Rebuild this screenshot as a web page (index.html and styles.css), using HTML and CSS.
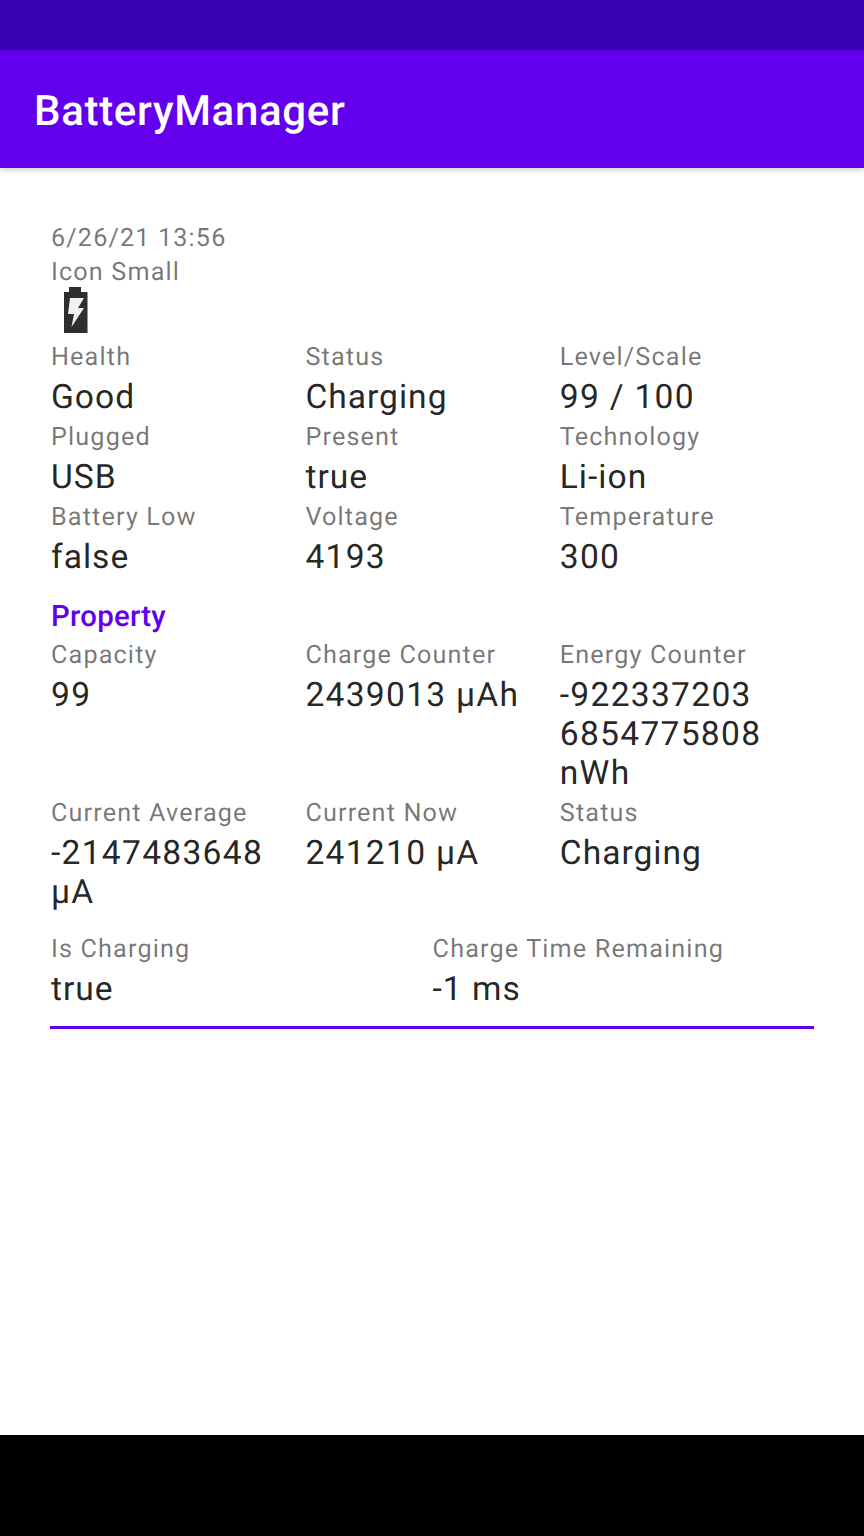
FILE: index.html
```html
<!DOCTYPE html>
<html lang="en">
  <head>
    <meta charset="UTF-8" />
    <meta name="viewport" content="width=device-width, initial-scale=1.0" />
    <title>BatteryManager</title>
    <link rel="stylesheet" href="styles.css">
  </head>
  <body>
    <div class="status-bar"></div>
    <header class="app-bar">BatteryManager</header>

    <main class="content">
      <div class="label">6/26/21 13:56</div>
      <div class="label">Icon Small</div>
      <svg class="battery-icon" width="48" height="55" viewBox="0 0 48 55">
        <defs>
          <filter id="soften"><feGaussianBlur stdDeviation="0.5" /></filter>
        </defs>
        <g filter="url(#soften)">
          <path fill="#2e2e2e" d="M18 1h12v5h6.500v41H13V6h5z" />
          <path fill="#f2f2f2" d="M19 12h14l-6 10h6L20.500 41l2.500-13h-6z" />
        </g>
      </svg>

      <div class="grid-3">
        <div class="cell"><div class="label">Health</div><div class="value">Good</div></div>
        <div class="cell"><div class="label">Status</div><div class="value">Charging</div></div>
        <div class="cell"><div class="label">Level/Scale</div><div class="value num">99 / 100</div></div>
        <div class="cell"><div class="label">Plugged</div><div class="value">USB</div></div>
        <div class="cell"><div class="label">Present</div><div class="value">true</div></div>
        <div class="cell"><div class="label">Technology</div><div class="value">Li-ion</div></div>
        <div class="cell"><div class="label">Battery Low</div><div class="value">false</div></div>
        <div class="cell"><div class="label">Voltage</div><div class="value num">4193</div></div>
        <div class="cell"><div class="label">Temperature</div><div class="value num">300</div></div>
      </div>

      <div class="section-title">Property</div>

      <div class="grid-3">
        <div class="cell"><div class="label">Capacity</div><div class="value num">99</div></div>
        <div class="cell"><div class="label">Charge Counter</div><div class="value num">2439013 µAh</div></div>
        <div class="cell"><div class="label">Energy Counter</div><div class="value num">-922337203<br />6854775808<br />nWh</div></div>
        <div class="cell"><div class="label">Current Average</div><div class="value num">-2147483648<br />µA</div></div>
        <div class="cell"><div class="label">Current Now</div><div class="value num">241210 µA</div></div>
        <div class="cell"><div class="label">Status</div><div class="value">Charging</div></div>
      </div>

      <div class="grid-2">
        <div class="cell"><div class="label">Is Charging</div><div class="value">true</div></div>
        <div class="cell"><div class="label">Charge Time Remaining</div><div class="value">-1 ms</div></div>
      </div>

      <hr class="divider" />
    </main>

    <div class="nav-bar"></div>
  </body>
</html>
```

FILE: styles.css
```css
body {
  margin: 0;
  height: 1536px;
  display: flex;
  flex-direction: column;
  font-family: Roboto, sans-serif;
  text-rendering: geometricPrecision;
  background-color: white;
  overflow: hidden;
}

.status-bar {
  height: 50px;
  background-color: #3700b3;
}

.app-bar {
  height: 118px;
  padding: 4px 0 0 34px;
  display: flex;
  align-items: center;
  box-sizing: border-box;
  background-color: #6200ee;
  color: white;
  font-size: 42px;
  font-weight: 500;
  letter-spacing: 0.68px;
  box-shadow: 0 2px 6px rgba(0, 0, 0, 0.2);
  z-index: 1;
}

.content {
  flex: 1;
  padding: 54px 50px 0 51px;
}

.label {
  height: 34px;
  line-height: 34px;
  font-size: 25.2px;
  letter-spacing: 1.15px;
  color: rgba(0, 0, 0, 0.54);
}

.value {
  padding: 2.5px 0 4.5px;
  line-height: 39px;
  font-size: 33.6px;
  letter-spacing: 1px;
  color: rgba(0, 0, 0, 0.87);
}

.num {
  letter-spacing: 1.28px;
}

.battery-icon {
  display: block;
  height: 55px;
  margin-top: -4px;
}

.grid-3 {
  display: grid;
  grid-template-columns: repeat(3, 254.4px);
}

.grid-2 {
  display: grid;
  grid-template-columns: repeat(2, 381.6px);
  padding-top: 17px;
}

.section-title {
  margin: 19px 0 5px;
  height: 34px;
  line-height: 34px;
  font-size: 29.4px;
  font-weight: 500;
  letter-spacing: 0.25px;
  color: #6200ee;
}

.divider {
  margin: 13px 0 0 -1px;
  border: none;
  height: 3px;
  background-color: #6200ee;
}

.nav-bar {
  height: 101px;
  background-color: black;
}
```
